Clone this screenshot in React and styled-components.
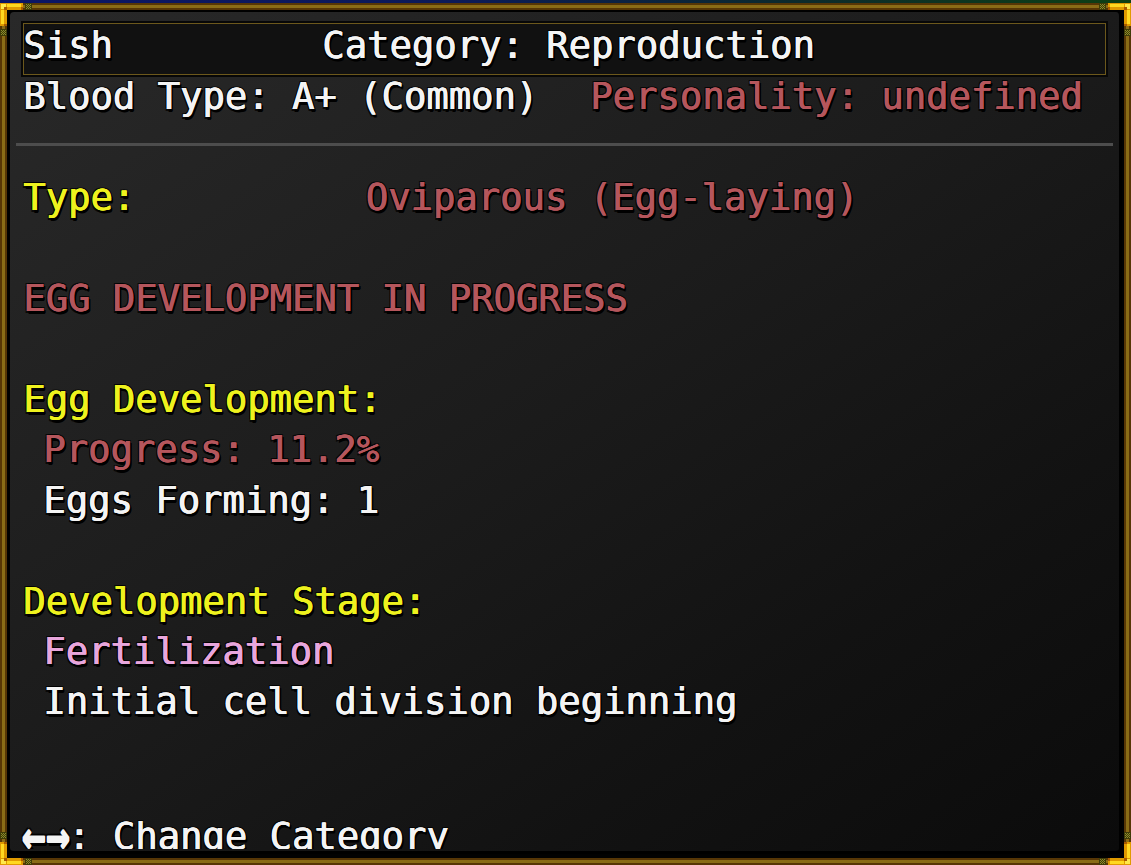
import React from 'react';
import styled, { createGlobalStyle } from 'styled-components';

const Global = createGlobalStyle`
  html, body { margin: 0; padding: 0; background: #000; }
  body { width: 1131px; height: 865px; overflow: hidden; }
`;

const LINE = 50.46;

const Screen = styled.div`
  position: relative;
  width: 1131px;
  height: 865px;
  box-sizing: border-box;
  padding-top: 3px;
  background:
    linear-gradient(90deg, #0a1566 0%, #0b1a58 40%, #0c2a2c 70%, #0e4014 100%) 0 0 / 100% 3px no-repeat,
    #000;
`;

const Frame = styled.div`
  height: 862px;
  box-sizing: border-box;
  border: 2px solid #573605;
  box-shadow: inset 0 0 0 3px #8a6c16, inset 0 0 0 5px #573605;
  background: #020202;
  padding: 5px 7px 9px 6px;
  display: flex;
`;

const Panel = styled.div`
  flex: 1;
  display: flex;
  flex-direction: column;
  border-style: solid;
  border-color: #000;
  border-width: 2px 3px 3px 2px;
  border-radius: 6px;
  background: linear-gradient(145deg, #292929 0%, #1c1c1c 45%, #121212 75%, #0b0b0b 100%);
  padding: 9px 11px 2px 11px;
  overflow: hidden;
  font-family: "DejaVu Sans Mono", "Liberation Mono", monospace;
  font-weight: 400;
  font-size: 37.2px;
  color: #f4f4f4;
  white-space: pre;
  text-shadow: 0.8px 0 0, 0.4px 0.4px 0, 2.5px 2px 0 #000, 2px 2.5px 0 #000, -1px -1px 0 rgba(0,0,0,0.75), 1.5px -1px 0 rgba(0,0,0,0.75), -1px 1.5px 0 rgba(0,0,0,0.75);
`;

const Header = styled.div`
  flex-shrink: 0;
  height: 56px;
  box-sizing: border-box;
  border: 2px solid #070707;
  box-shadow: inset 0 0 0 1px #6c581c;
  background: #111;
  display: flex;
  align-items: flex-start;
  line-height: 43px;
  padding-top: 1px;
`;

const NameCell = styled.span`
  width: 299px;
  flex-shrink: 0;
`;

const Row = styled.div`
  flex-shrink: 0;
  height: ${LINE}px;
  line-height: 38px;
  display: flex;
  gap: ${p => p.$gap || 0}px;
  padding-left: ${p => (p.$indent ? '22px' : '2px')};
`;

const LabelCell = styled.span`
  width: ${p => p.$width}px;
  flex-shrink: 0;
`;

const Txt = styled.span`
  color: ${p =>
    p.$tone === 'yellow' ? '#eef21e' :
    p.$tone === 'red' ? '#b5565c' :
    p.$tone === 'pink' ? '#e8a6dc' : '#f4f4f4'};
`;

const DividerRow = styled.div`
  flex-shrink: 0;
  height: ${LINE}px;
  box-sizing: border-box;
  padding-top: 15.5px;
`;

const Rule = styled.div`
  height: 3px;
  margin: 0 -5px;
  background: #4d4d4d;
`;

const Footer = styled.div`
  flex-shrink: 0;
  margin-top: auto;
  height: 32px;
  line-height: 38px;
  padding-left: 2px;
  overflow: hidden;
`;

const Arrows = styled.span`
  display: inline-block;
  font-weight: 700;
  transform: scale(1.08, 1.5);
  transform-origin: 50% 58%;
`;

const OrnamentBox = styled.svg`
  position: absolute;
  width: 36px;
  height: 36px;
  ${p => (p.$c.includes('t') ? 'top: 3px;' : 'bottom: 0;')}
  ${p => (p.$c.includes('l') ? 'left: 0;' : 'right: 0;')}
  transform: scale(${p => (p.$c.includes('r') ? -1 : 1)}, ${p => (p.$c.includes('b') ? -1 : 1)});
`;

const knobDots = [
  [1, 1], [3, 1], [5, 1], [2, 2], [4, 2], [1, 3], [3, 3], [5, 3], [2, 4], [4, 4], [1, 5], [3, 5], [5, 5],
];

function Knob({ x, y }) {
  return (
    <g>
      <rect x={x} y={y} width="7" height="7" fill="#3f3c08" />
      {knobDots.map(([dx, dy]) => (
        <rect key={`${dx}-${dy}`} x={x + dx} y={y + dy} width="1" height="1" fill="#8d8b2b" />
      ))}
    </g>
  );
}

function Ornament({ corner }) {
  return (
    <OrnamentBox $c={corner} viewBox="0 0 36 36" shapeRendering="crispEdges">
      <rect x="0" y="0" width="23" height="7" fill="#e09a00" />
      <rect x="0" y="0" width="7" height="23" fill="#e09a00" />
      <rect x="7" y="1" width="14" height="3" fill="#ffd820" />
      <rect x="1" y="7" width="3" height="14" fill="#ffd820" />
      <rect x="1" y="1" width="5" height="5" fill="#ffe84a" />
      <rect x="4" y="4" width="3" height="3" fill="#a85a00" />
      <rect x="21" y="4" width="2" height="3" fill="#a85a00" />
      <rect x="4" y="21" width="3" height="2" fill="#a85a00" />
      <Knob x={25} y={0} />
      <Knob x={0} y={26} />
    </OrnamentBox>
  );
}

export default function App() {
  return (
    <>
      <Global />
      <Screen>
        <Frame>
          <Panel>
            <Header>
              <NameCell>Sish</NameCell>
              <span>Category: Reproduction</span>
            </Header>
            <Row $gap={52}>
              <span>Blood Type: A+ (Common)</span>
              <Txt $tone="red">Personality: undefined</Txt>
            </Row>
            <DividerRow>
              <Rule />
            </DividerRow>
            <Row>
              <LabelCell $width={342.5}><Txt $tone="yellow">Type:</Txt></LabelCell>
              <Txt $tone="red">Oviparous (Egg-laying)</Txt>
            </Row>
            <Row />
            <Row><Txt $tone="red">EGG DEVELOPMENT IN PROGRESS</Txt></Row>
            <Row />
            <Row><Txt $tone="yellow">Egg Development:</Txt></Row>
            <Row $indent><Txt $tone="red">Progress: 11.2%</Txt></Row>
            <Row $indent><span>Eggs Forming: 1</span></Row>
            <Row />
            <Row><Txt $tone="yellow">Development Stage:</Txt></Row>
            <Row $indent><Txt $tone="pink">Fertilization</Txt></Row>
            <Row $indent><span>Initial cell division beginning</span></Row>
            <Footer><Arrows>←→</Arrows>: Change Category</Footer>
          </Panel>
        </Frame>
        <Ornament corner="tl" />
        <Ornament corner="tr" />
        <Ornament corner="bl" />
        <Ornament corner="br" />
      </Screen>
    </>
  );
}
